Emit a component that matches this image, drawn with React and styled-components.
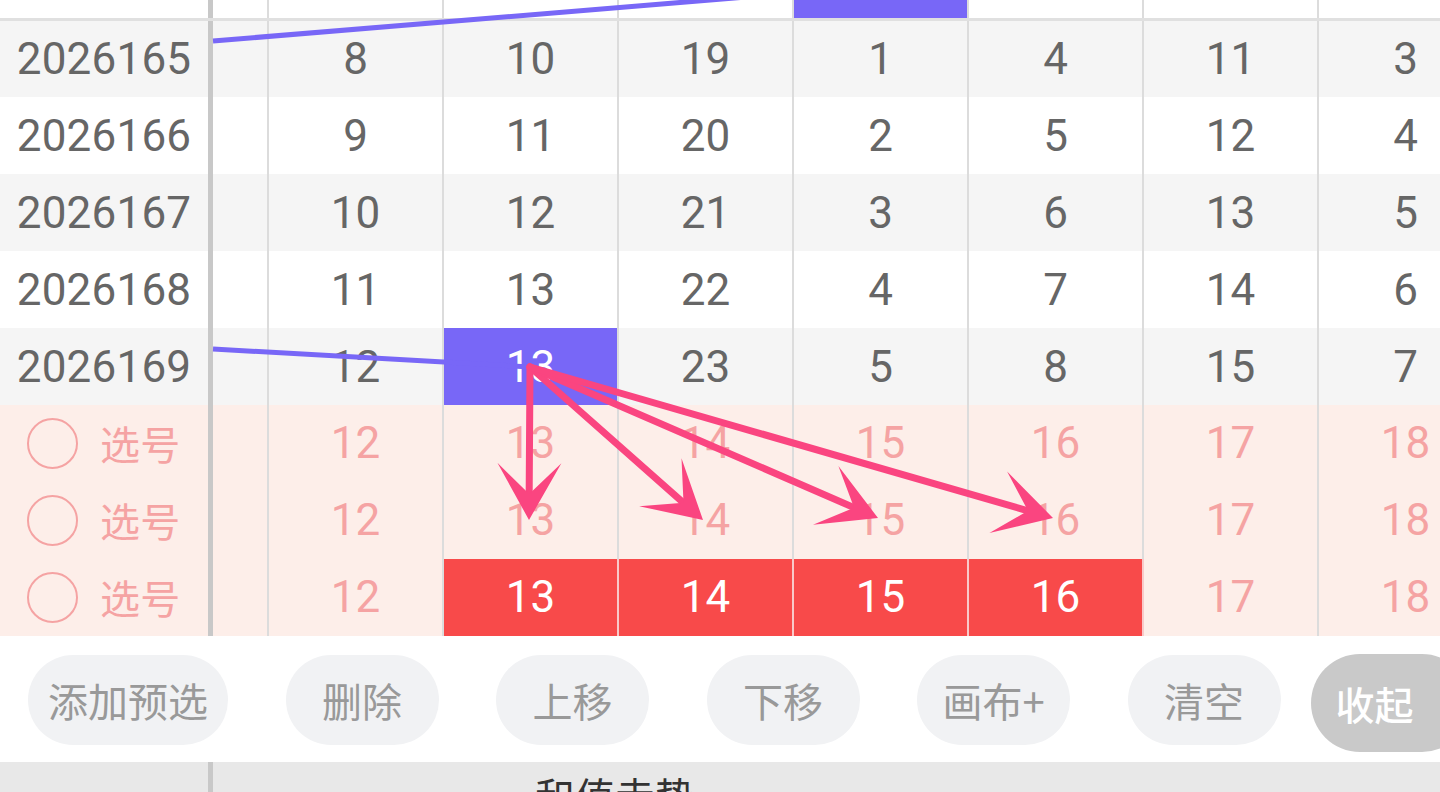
import React from "react";
import styled, { createGlobalStyle } from "styled-components";

const GlobalStyle = createGlobalStyle`
  html, body {
    margin: 0;
    padding: 0;
    background: #ffffff;
  }
  body {
    width: 1440px;
    height: 792px;
    overflow: hidden;
    font-family: Roboto, "Noto Sans CJK SC", sans-serif;
  }
  * {
    box-sizing: border-box;
  }
`;

const ROW_H = 76.9;
const PURPLE = "#7867f7";
const RED = "#f84a4a";
const ARROW = "#fa4580";
const PINK_TEXT = "#f5a3a3";

const rowBg = {
  top: "#ffffff",
  odd: "#f5f5f5",
  even: "#ffffff",
  pick: "#fdeee9",
};

const Page = styled.div`
  width: 1440px;
  height: 792px;
  overflow: hidden;
  display: flex;
  flex-direction: column;
`;

const Board = styled.div`
  position: relative;
  width: 1440px;
  overflow: hidden;
  flex-shrink: 0;
`;

const Row = styled.div`
  display: flex;
  height: ${(p) => (p.$variant === "top" ? "20.5px" : `${ROW_H}px`)};
  background: ${(p) => rowBg[p.$variant]};
  border-bottom: ${(p) => (p.$variant === "top" ? "3px solid #e0e0e0" : "none")};
  color: ${(p) => (p.$variant === "pick" ? PINK_TEXT : "#666666")};
`;

const IssueCell = styled.div`
  flex: 0 0 213px;
  border-right: 5px solid #c8c8c8;
  display: flex;
  align-items: center;
  justify-content: ${(p) => (p.$pick ? "flex-start" : "center")};
  gap: 22px;
  padding-left: ${(p) => (p.$pick ? "27px" : "0")};
  font-size: 44px;
  letter-spacing: 0.2px;
`;

const Cell = styled.div`
  flex: 0 0 ${(p) => p.$w || 175}px;
  border-right: 2.5px solid ${(p) => (p.$fill === "red" ? "#f9c9c9" : "#dcdcdc")};
  display: flex;
  align-items: center;
  justify-content: center;
  font-size: 44px;
  background: ${(p) =>
    p.$fill === "purple" ? PURPLE : p.$fill === "red" ? RED : "transparent"};
  color: ${(p) => (p.$fill ? "#ffffff" : "inherit")};
`;

const Circle = styled.span`
  width: 51px;
  height: 51px;
  border-radius: 50%;
  border: 2.5px solid ${PINK_TEXT};
  flex-shrink: 0;
`;

const PickLabel = styled.span`
  font-family: "Noto Sans CJK SC", sans-serif;
  font-size: 40px;
  color: ${PINK_TEXT};
`;

const Overlay = styled.svg`
  position: absolute;
  left: 0;
  top: 0;
  pointer-events: none;
`;

const Toolbar = styled.div`
  height: 126px;
  flex-shrink: 0;
  display: flex;
  align-items: flex-start;
  gap: 57.5px;
  padding: 19px 0 0 28px;
  background: #ffffff;
  overflow: hidden;
`;

const Pill = styled.div`
  height: 90px;
  min-width: 153px;
  padding: 0 20px;
  border-radius: 45px;
  background: #f1f2f4;
  color: #999999;
  font-family: "Noto Sans CJK SC", sans-serif;
  font-size: 40px;
  display: flex;
  align-items: center;
  justify-content: center;
  flex-shrink: 0;
  white-space: nowrap;
`;

const Collapse = styled.div`
  margin-left: -27.5px;
  margin-top: -1px;
  height: 98px;
  width: 160px;
  flex-shrink: 0;
  border-radius: 49px;
  background: #c9c9c9;
  color: #ffffff;
  font-family: "Noto Sans CJK SC", sans-serif;
  font-size: 39px;
  font-weight: 500;
  display: flex;
  align-items: center;
  padding-left: 25px;
`;

const BottomBar = styled.div`
  flex: 1;
  display: flex;
  background: #e8e8e8;
  overflow: hidden;
`;

const BottomIssue = styled.div`
  flex: 0 0 213px;
  border-right: 5px solid #c8c8c8;
`;

const SectionTitle = styled.div`
  padding: 9px 0 0 322px;
  font-family: "Noto Sans CJK SC", sans-serif;
  font-size: 40px;
  line-height: 1.2;
  color: #333333;
  white-space: nowrap;
`;

const history = [
  ["2026165", [8, 10, 19, 1, 4, 11, 3]],
  ["2026166", [9, 11, 20, 2, 5, 12, 4]],
  ["2026167", [10, 12, 21, 3, 6, 13, 5]],
  ["2026168", [11, 13, 22, 4, 7, 14, 6]],
  ["2026169", [12, 13, 23, 5, 8, 15, 7], 1],
];

const pickValues = [12, 13, 14, 15, 16, 17, 18];
const picks = [[], [], [1, 2, 3, 4]];

const buttons = ["添加预选", "删除", "上移", "下移", "画布+", "清空"];

// arrows from the last hit to the chosen numbers
const ORIGIN = [530, 367];
const tips = [
  [529, 520],
  [703, 520],
  [878, 518],
  [1053, 518],
];

function arrow([sx, sy], [tx, ty]) {
  const dx = tx - sx;
  const dy = ty - sy;
  const len = Math.hypot(dx, dy);
  const ux = dx / len;
  const uy = dy / len;
  const nx = -uy;
  const ny = ux;
  const L = 57;
  const W = 32;
  const N = 26;
  const bx = tx - ux * L;
  const by = ty - uy * L;
  const notch = [tx - ux * N, ty - uy * N];
  const head = [
    [tx, ty],
    [bx + nx * W, by + ny * W],
    notch,
    [bx - nx * W, by - ny * W],
  ]
    .map((p) => p.map((v) => v.toFixed(1)).join(","))
    .join(" ");
  return { notch, head };
}

export default function App() {
  return (
    <Page>
      <GlobalStyle />
      <Board>
        <Row $variant="top">
          <IssueCell />
          <Cell $w={56} />
          {[0, 1, 2, 3, 4, 5, 6].map((i) => (
            <Cell key={i} $fill={i === 3 ? "purple" : undefined} />
          ))}
        </Row>
        {history.map(([issue, nums, hit], r) => (
          <Row key={issue} $variant={r % 2 === 0 ? "odd" : "even"}>
            <IssueCell>{issue}</IssueCell>
            <Cell $w={56} />
            {nums.map((n, i) => (
              <Cell key={i} $fill={i === hit ? "purple" : undefined}>
                {n}
              </Cell>
            ))}
          </Row>
        ))}
        {picks.map((filled, r) => (
          <Row key={r} $variant="pick">
            <IssueCell $pick>
              <Circle />
              <PickLabel>选号</PickLabel>
            </IssueCell>
            <Cell $w={56} />
            {pickValues.map((n, i) => (
              <Cell key={i} $fill={filled.includes(i) ? "red" : undefined}>
                {n}
              </Cell>
            ))}
          </Row>
        ))}
        <Overlay width="1440" height="636" viewBox="0 0 1440 636">
          <line x1="213" y1="41" x2="880" y2="-14" stroke={PURPLE} strokeWidth="5" />
          <line x1="213" y1="349" x2="530" y2="367" stroke={PURPLE} strokeWidth="5" />
          {tips.map((t, i) => {
            const { notch, head } = arrow(ORIGIN, t);
            return (
              <g key={i}>
                <line
                  x1={ORIGIN[0]}
                  y1={ORIGIN[1]}
                  x2={notch[0]}
                  y2={notch[1]}
                  stroke={ARROW}
                  strokeWidth="7"
                  strokeLinecap="round"
                />
                <polygon points={head} fill={ARROW} />
              </g>
            );
          })}
        </Overlay>
      </Board>
      <Toolbar>
        {buttons.map((b) => (
          <Pill key={b}>{b}</Pill>
        ))}
        <Collapse>收起</Collapse>
      </Toolbar>
      <BottomBar>
        <BottomIssue />
        <SectionTitle>和值走势</SectionTitle>
      </BottomBar>
    </Page>
  );
}
